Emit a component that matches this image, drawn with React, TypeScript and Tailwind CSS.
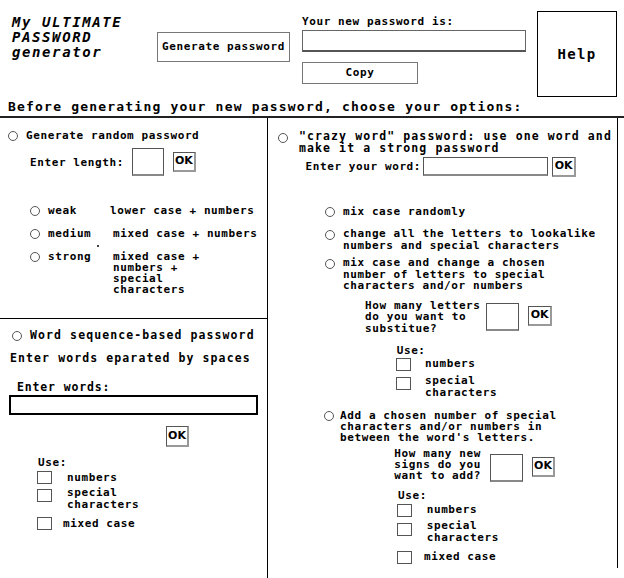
import React from "react";

const F = { fontFamily: '"DejaVu Sans Mono", "Liberation Mono", monospace' };

function Radio({ className = "" }: { className?: string }) {
  return <div className={"w-[10px] h-[10px] rounded-full border border-[#555] shrink-0 " + className} />;
}
function Check({ className = "" }: { className?: string }) {
  return <div className={"w-[15px] h-[13px] border border-[#555] shrink-0 " + className} />;
}
function Ok({ className = "" }: { className?: string }) {
  return (
    <div
      className={"w-[23px] h-[20px] border border-[#555] border-b-2 border-r-2 border-b-[#999] border-r-[#999] flex items-center justify-center text-[11px] tracking-normal font-bold shrink-0 " + className}
      style={{ fontFamily: '"DejaVu Sans", sans-serif' }}
    >
      OK
    </div>
  );
}
function Box({ className = "" }: { className?: string }) {
  return <div className={"border border-[#555] border-b-2 border-b-[#888] shrink-0 " + className} />;
}

export default function App() {
  return (
    <div className="w-[624px] h-[578px] bg-white text-black font-bold text-[11px] tracking-[0.6px] overflow-hidden" style={F}>
      {/* header */}
      <div className="flex items-start h-[97px]">
        <div className="pl-[12px] pt-[15px] w-[157px] text-[14px] tracking-[1.6px] leading-[15px] italic whitespace-nowrap">
          My ULTIMATE
          <br />
          PASSWORD
          <br />
          generator
        </div>
        <div className="mt-[32px] w-[133px] h-[30px] border-[1.5px] border-[#777] flex items-center justify-center whitespace-nowrap">
          Generate password
        </div>
        <div className="ml-[12px] w-[224px] pt-[16px]">
          <div className="leading-[12px] whitespace-nowrap">Your new password is:</div>
          <div className="mt-[2px] h-[22px] w-[224px] border-[1.5px] border-[#666] border-b-2 border-b-[#555]" />
          <div className="mt-[10px] w-[116px] h-[22px] border-[1.5px] border-[#777] flex items-center justify-center">Copy</div>
        </div>
        <div className="ml-[11px] mt-[11px] w-[80px] h-[86px] border border-black flex items-center justify-center text-[14px] tracking-[1.3px]">
          Help
        </div>
      </div>
      <div className="h-[21px] pl-[8px] border-b-2 border-[#222] text-[13px] tracking-[1.2px] leading-[20px] whitespace-nowrap">
        Before generating your new password, choose your options:
      </div>

      {/* body */}
      <div className="flex items-start h-[460px]">
        {/* left column */}
        <div className="w-[268px] h-[460px] border-r border-black flex flex-col">
          <div className="h-[201px] border-b border-black relative">
            <div className="mt-[11.5px] flex items-center h-[12px] leading-[12px]">
              <Radio className="ml-[8px]" />
              <span className="ml-[8px] whitespace-nowrap">Generate random password</span>
            </div>
            <div className="mt-[6.5px] flex items-start">
              <span className="ml-[30px] mt-[8.5px] leading-[12px] whitespace-nowrap">Enter length:</span>
              <Box className="ml-[8px] w-[32px] h-[28px]" />
              <Ok className="ml-[9px] mt-[4px]" />
            </div>
            <div className="mt-[29px] flex items-center h-[12px] leading-[12px]">
              <Radio className="ml-[30px]" />
              <span className="ml-[8px] w-[62px] whitespace-nowrap">weak</span>
              <span className="whitespace-nowrap">lower case + numbers</span>
            </div>
            <div className="mt-[10.5px] flex items-center h-[12px] leading-[12px]">
              <Radio className="ml-[30px]" />
              <span className="ml-[8px] w-[65px] whitespace-nowrap">medium</span>
              <span className="whitespace-nowrap">mixed case + numbers</span>
            </div>
            <div className="mt-[11.5px] flex items-start leading-[11px]">
              <Radio className="ml-[30px] mt-[0.5px]" />
              <span className="ml-[8px] w-[65px] whitespace-nowrap">strong</span>
              <span className="whitespace-nowrap">
                mixed case +
                <br />
                numbers +
                <br />
                special
                <br />
                characters
              </span>
            </div>
            <div className="absolute left-[97px] top-[127px] w-[2px] h-[2px] bg-[#444]" />
          </div>

          <div className="flex flex-col">
            <div className="mt-[10px] flex items-center h-[13px] leading-[13px] text-[11.5px] tracking-[1.1px]">
              <Radio className="ml-[12px]" />
              <span className="ml-[8px] whitespace-nowrap">Word sequence-based password</span>
            </div>
            <div className="mt-[9.5px] ml-[10px] leading-[13px] text-[11.5px] tracking-[1.1px] whitespace-nowrap">Enter words eparated by spaces</div>
            <div className="mt-[16px] ml-[17px] leading-[13px] text-[11.5px] tracking-[0.85px] whitespace-nowrap">Enter words:</div>
            <div className="mt-[1.5px] ml-[9px] w-[249px] h-[20px] border-2 border-black" />
            <Ok className="mt-[11px] ml-[166px] h-[21px]" />
            <div className="mt-[10px] ml-[38px] leading-[12px]">Use:</div>
            <div className="mt-[2px] flex items-center h-[13px] leading-[12px]">
              <Check className="ml-[37px]" />
              <span className="ml-[15px]">numbers</span>
            </div>
            <div className="mt-[3px] flex items-start leading-[12px]">
              <Check className="ml-[37px] mt-[2px]" />
              <span className="ml-[15px] whitespace-nowrap">
                special
                <br />
                characters
              </span>
            </div>
            <div className="mt-[6px] flex items-center h-[13px] leading-[12px]">
              <Check className="ml-[37px]" />
              <span className="ml-[11px] whitespace-nowrap">mixed case</span>
            </div>
          </div>
        </div>

        {/* right column */}
        <div className="w-[350px] h-[450px] border-r border-black flex flex-col">
          <div className="mt-[13px] flex items-start">
            <Radio className="ml-[10px] mt-[1.5px]" />
            <span className="ml-[11px] text-[11.5px] tracking-[1.1px] leading-[11.5px] whitespace-nowrap">
              "crazy word" password: use one word and
              <br />
              make it a strong password
            </span>
          </div>
          <div className="mt-[3px] flex items-start">
            <span className="ml-[37.5px] mt-[4px] leading-[12px] whitespace-nowrap">Enter your word:</span>
            <Box className="ml-[2px] w-[125px] h-[19px]" />
            <Ok className="ml-[4px] w-[24px]" />
          </div>
          <div className="mt-[29px] flex items-center h-[12px] leading-[12px]">
            <Radio className="ml-[57px]" />
            <span className="ml-[8px] whitespace-nowrap">mix case randomly</span>
          </div>
          <div className="mt-[10px] flex items-start leading-[12px]">
            <Radio className="ml-[57px] mt-[2px]" />
            <span className="ml-[8px] whitespace-nowrap">
              change all the letters to lookalike
              <br />
              numbers and special characters
            </span>
          </div>
          <div className="mt-[5px] flex items-start leading-[11.5px]">
            <Radio className="ml-[57px] mt-[2px]" />
            <span className="ml-[8px] whitespace-nowrap">
              mix case and change a chosen
              <br />
              number of letters to special
              <br />
              characters and/or numbers
            </span>
          </div>
          <div className="mt-[8.5px] flex items-start">
            <span className="ml-[97px] leading-[11.3px] whitespace-nowrap">
              How many letters
              <br />
              do you want to
              <br />
              substitue?
            </span>
            <Box className="ml-[5.5px] mt-[2.7px] w-[33px] h-[28px]" />
            <Ok className="ml-[9px] mt-[6px] w-[24px]" />
          </div>
          <div className="mt-[10.7px] ml-[128.7px] leading-[12px]">Use:</div>
          <div className="mt-[1.3px] flex items-center h-[13px] leading-[12px]">
            <Check className="ml-[128px]" />
            <span className="ml-[14px]">numbers</span>
          </div>
          <div className="mt-[4px] flex items-start leading-[12px]">
            <Check className="ml-[128px] mt-[2.3px]" />
            <span className="ml-[14px] whitespace-nowrap">
              special
              <br />
              characters
            </span>
          </div>
          <div className="mt-[11px] flex items-start leading-[11.3px]">
            <Radio className="ml-[56px] mt-[1px]" />
            <span className="ml-[6px] whitespace-nowrap">
              Add a chosen number of special
              <br />
              characters and/or numbers in
              <br />
              between the word's letters.
            </span>
          </div>
          <div className="mt-[4px] flex items-start">
            <span className="ml-[126.3px] leading-[11.3px] whitespace-nowrap">
              How many new
              <br />
              signs do you
              <br />
              want to add?
            </span>
            <Box className="ml-[9px] mt-[6px] w-[33px] h-[28px]" />
            <Ok className="ml-[9px] mt-[9px] w-[22px]" />
          </div>
          <div className="mt-[8.7px] ml-[130px] leading-[12px]">Use:</div>
          <div className="mt-[1.3px] flex items-center h-[13px] leading-[12px]">
            <Check className="ml-[129px]" />
            <span className="ml-[14.7px]">numbers</span>
          </div>
          <div className="mt-[3.7px] flex items-start leading-[12px]">
            <Check className="ml-[129px] mt-[2.3px]" />
            <span className="ml-[14.7px] whitespace-nowrap">
              special
              <br />
              characters
            </span>
          </div>
          <div className="mt-[6.3px] flex items-center h-[13px] leading-[12px]">
            <Check className="ml-[129px]" />
            <span className="ml-[12px] whitespace-nowrap">mixed case</span>
          </div>
        </div>
      </div>
    </div>
  );
}
